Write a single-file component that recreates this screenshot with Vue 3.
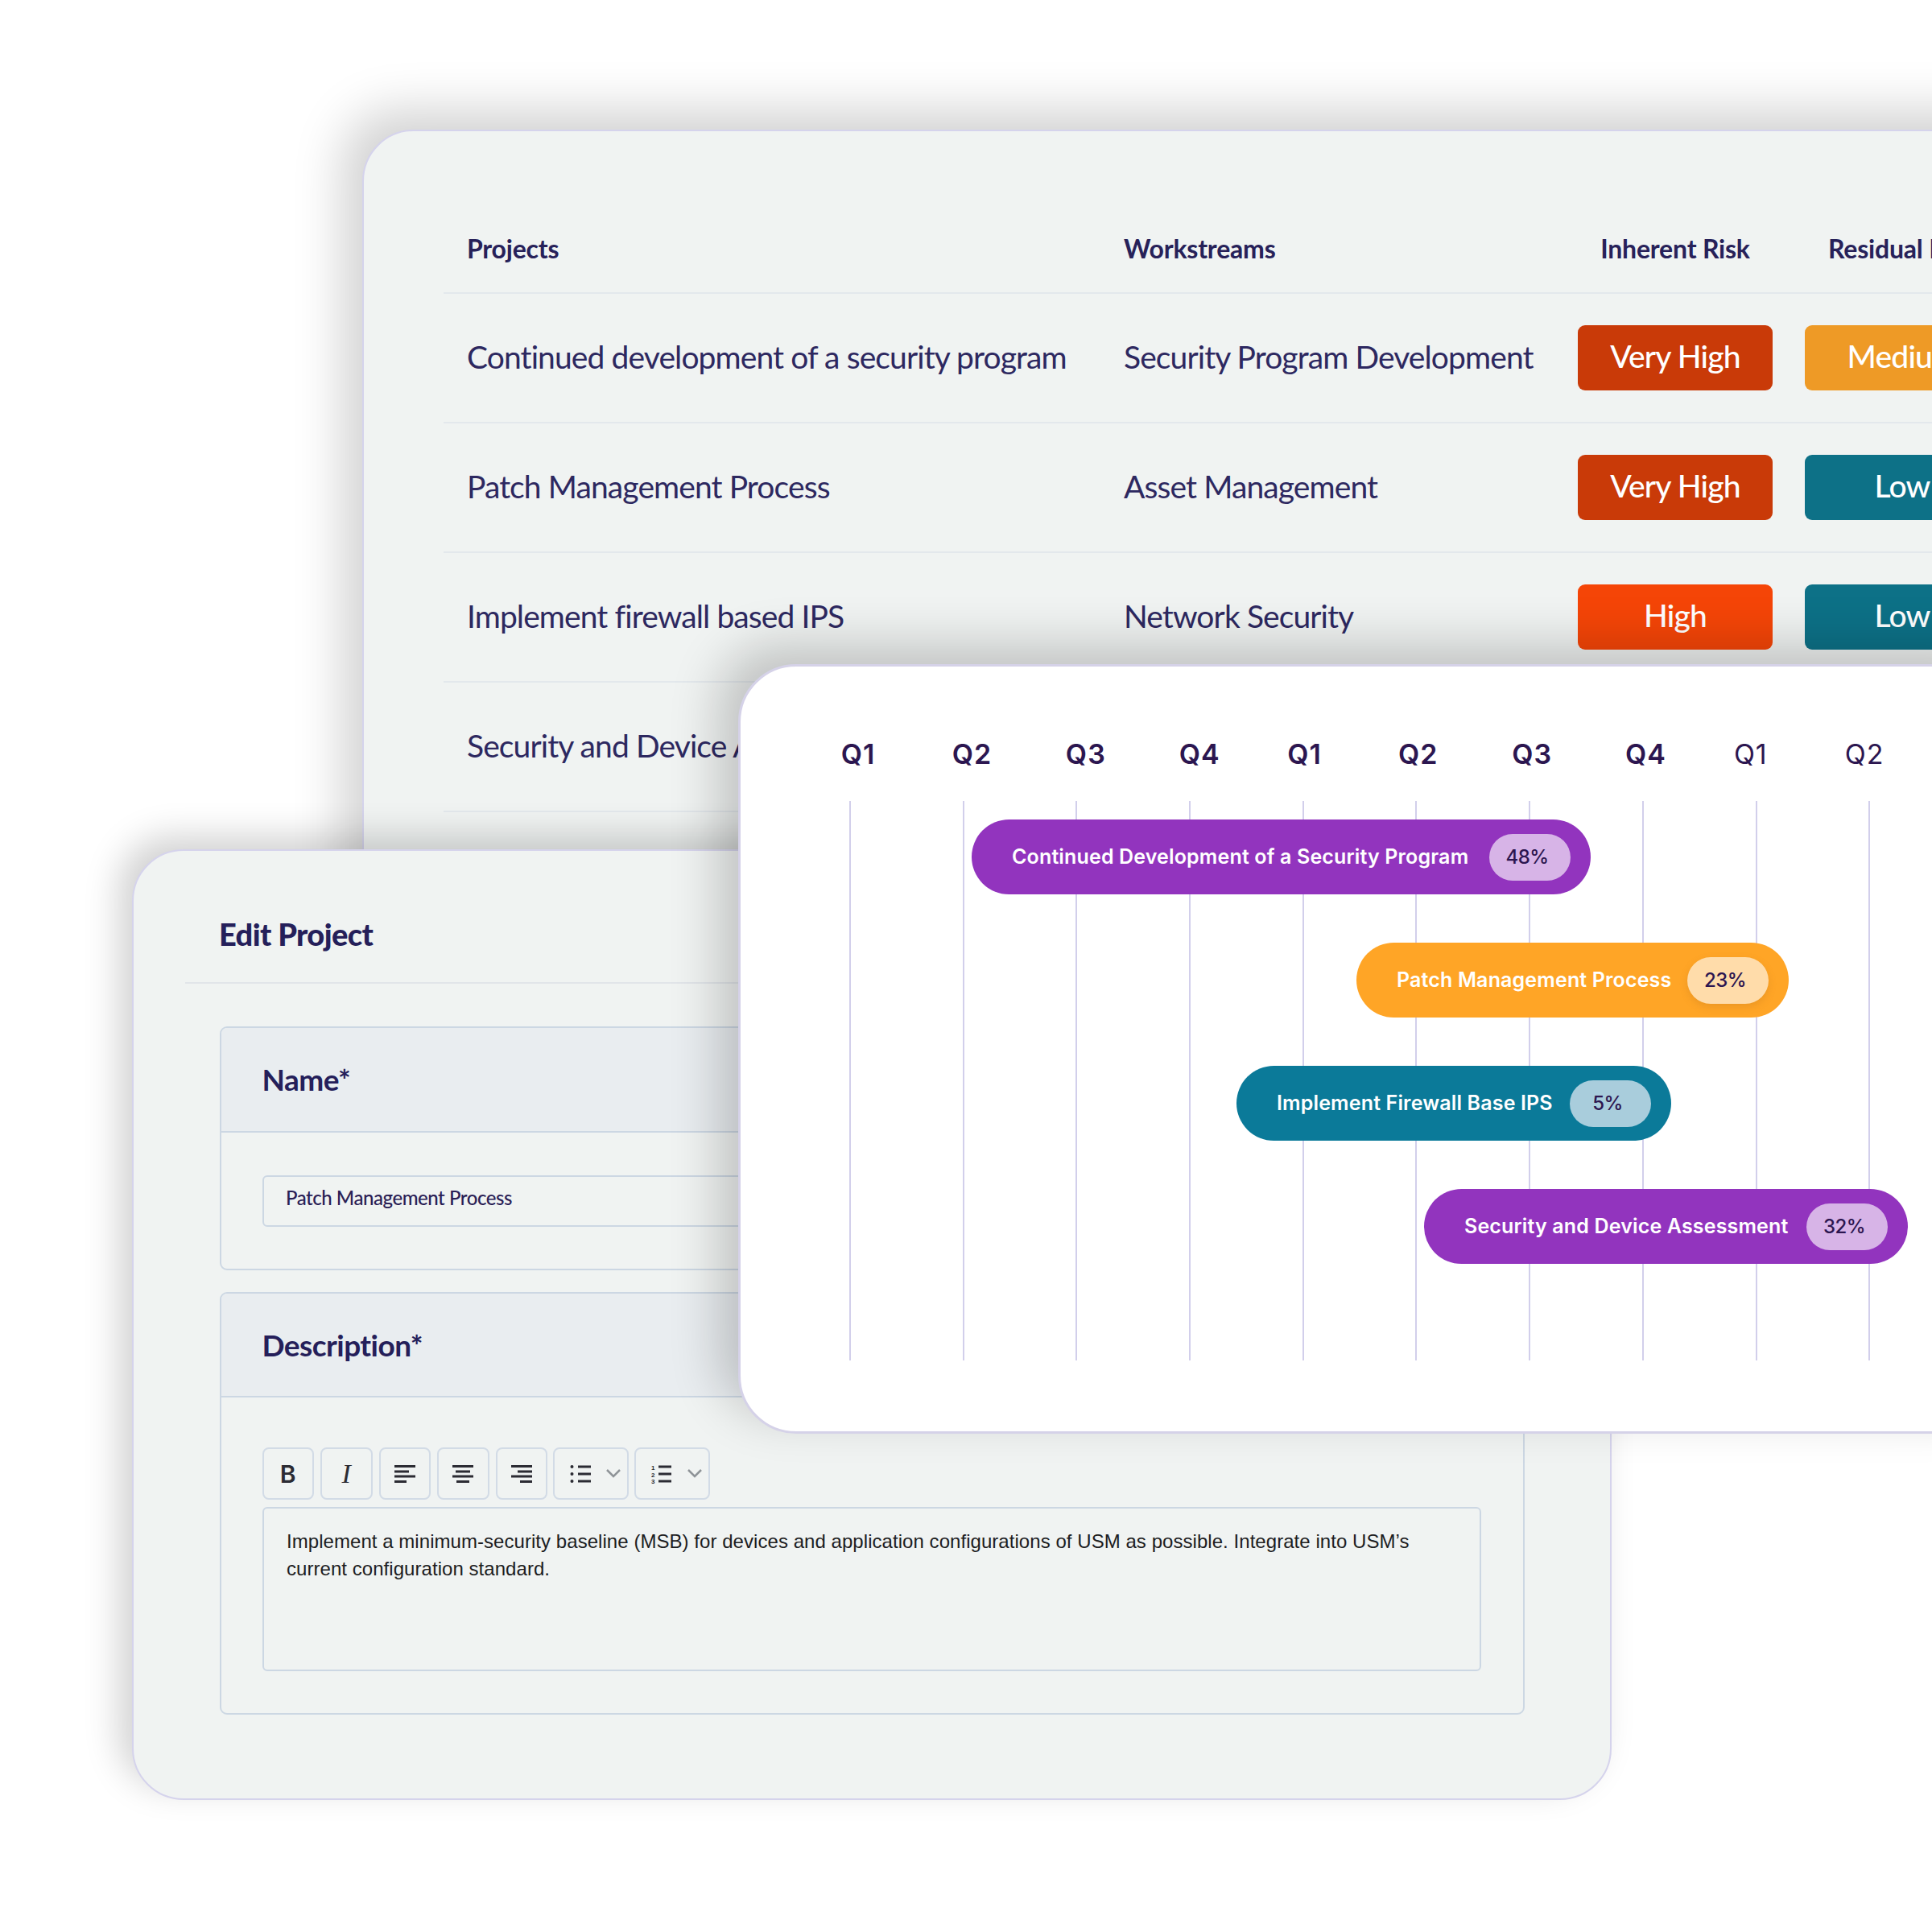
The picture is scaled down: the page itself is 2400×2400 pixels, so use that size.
<script setup>
const rows = [
  { project: 'Continued development of a security program', stream: 'Security Program Development', inherent: ['Very High', 'very-high'], residual: ['Medium', 'medium'] },
  { project: 'Patch Management Process', stream: 'Asset Management', inherent: ['Very High', 'very-high'], residual: ['Low', 'low'] },
  { project: 'Implement firewall based IPS', stream: 'Network Security', inherent: ['High', 'high'], residual: ['Low', 'low'] },
  { project: 'Security and Device Assessment', stream: 'Compliance', inherent: ['High', 'high'], residual: ['Low', 'low'] }
]
const years = [
  [{ q: 'Q1' }, { q: 'Q2' }, { q: 'Q3' }, { q: 'Q4' }],
  [{ q: 'Q1' }, { q: 'Q2' }, { q: 'Q3' }, { q: 'Q4' }],
  [{ q: 'Q1', light: true }, { q: 'Q2', light: true }]
]
const lines = 11
const bars = [
  { name: 'Continued Development of a Security Program', pct: '48%', tone: 'purple', left: 287, width: 769 },
  { name: 'Patch Management Process', pct: '23%', tone: 'orange', left: 765, width: 537 },
  { name: 'Implement Firewall Base IPS', pct: '5%', tone: 'teal', left: 616, width: 540 },
  { name: 'Security and Device Assessment', pct: '32%', tone: 'purple', left: 849, width: 601 }
]
</script>

<template>
  <div class="canvas">
    <section class="card table-card">
      <div class="row head-row">
        <div class="cell">Projects</div>
        <div class="cell">Workstreams</div>
        <div class="cell center">Inherent Risk</div>
        <div class="cell center">Residual Risk</div>
      </div>
      <div v-for="r in rows" :key="r.project" class="row">
        <div class="cell">{{ r.project }}</div>
        <div class="cell">{{ r.stream }}</div>
        <div class="risk-cell"><span class="risk" :class="r.inherent[1]">{{ r.inherent[0] }}</span></div>
        <div class="risk-cell"><span class="risk" :class="r.residual[1]">{{ r.residual[0] }}</span></div>
      </div>
    </section>

    <section class="card edit-card">
      <header class="edit-head"><h2>Edit Project</h2></header>

      <div class="box name-box">
        <div class="box-head">Name*</div>
        <div class="box-body">
          <div class="input">Patch Management Process</div>
        </div>
      </div>

      <div class="box desc-box">
        <div class="box-head">Description*</div>
        <div class="box-body">
          <div class="toolbar">
            <button class="tool glyph-b">B</button>
            <button class="tool glyph-i">I</button>
            <button class="tool">
              <svg width="26" height="22" viewBox="0 0 26 22"><path d="M0 1.500h26M0 8h18M0 14h26M0 20.500h15" class="ink" /></svg>
            </button>
            <button class="tool">
              <svg width="26" height="22" viewBox="0 0 26 22"><path d="M0 1.500h26M4 8h18M0 14h26M5 20.500h16" class="ink" /></svg>
            </button>
            <button class="tool">
              <svg width="26" height="22" viewBox="0 0 26 22"><path d="M0 1.500h26M8 8h18M0 14h26M11 20.500h15" class="ink" /></svg>
            </button>
            <button class="tool wide">
              <svg width="26" height="24" viewBox="0 0 26 24">
                <circle cx="2.500" cy="3" r="2" class="dot" /><circle cx="2.500" cy="12" r="2" class="dot" /><circle cx="2.500" cy="21" r="2" class="dot" />
                <path d="M10 3h16M10 12h16M10 21h16" class="ink" />
              </svg>
              <svg width="18" height="11" viewBox="0 0 18 11"><path d="M1 1l8 8 8-8" class="chev" /></svg>
            </button>
            <button class="tool wide">
              <svg width="26" height="24" viewBox="0 0 26 24">
                <text x="0" y="7" class="num">1</text><text x="0" y="15.500" class="num">2</text><text x="0" y="24" class="num">3</text>
                <path d="M9 3h16M9 12h16M9 21h16" class="ink" />
              </svg>
              <svg width="18" height="11" viewBox="0 0 18 11"><path d="M1 1l8 8 8-8" class="chev" /></svg>
            </button>
          </div>
          <div class="editor">Implement a minimum-security baseline (MSB) for devices and application configurations of USM as possible. Integrate into USM’s current configuration standard.</div>
        </div>
      </div>
    </section>

    <section class="card gantt-card">
      <div class="quarters">
        <div v-for="(year, y) in years" :key="y" class="year">
          <span v-for="(c, i) in year" :key="i" class="quarter" :class="{ light: c.light }">{{ c.q }}</span>
        </div>
      </div>
      <div class="timeline">
        <div class="grid-lines"><i v-for="n in lines" :key="n" class="grid-line"></i></div>
        <div class="bars">
          <div
            v-for="b in bars"
            :key="b.name"
            class="bar"
            :class="b.tone"
            :style="{ marginLeft: b.left + 'px', width: b.width + 'px' }"
          >
            <span class="bar-name">{{ b.name }}</span>
            <span class="pct">{{ b.pct }}</span>
          </div>
        </div>
      </div>
    </section>
  </div>
</template>

<style>
html, body { margin: 0; background: #fff; }
</style>

<style scoped>
.canvas {
  position: relative;
  width: 2400px;
  height: 2400px;
  overflow: hidden;
  background: #fff;
  font-family: Lato, "Liberation Sans", sans-serif;
  color: #2d2860;
}
.card {
  position: absolute;
  box-sizing: border-box;
  background: #f0f3f2;
  border: 2px solid #d5d3ec;
  border-radius: 64px;
}

/* table */
.table-card {
  left: 450px;
  top: 161px;
  width: 2120px;
  height: 1100px;
  padding: 0 0 0 99px;
  box-shadow: -24px -24px 62px rgba(0, 0, 0, 0.18);
}
.row {
  display: grid;
  grid-template-columns: 816px 593px 282px 282px;
  height: 161px;
  align-items: center;
  border-bottom: 2px solid #e3e8ec;
  box-sizing: border-box;
  font-size: 39px;
  letter-spacing: -0.9px;
}
.head-row {
  height: 202px;
  padding-top: 90px;
  align-items: center;
  font-size: 32px;
  font-weight: 700;
  letter-spacing: -0.2px;
  color: #272159;
}
.cell { padding: 0 0 3px 29px; white-space: nowrap; }
.head-row .cell { padding-bottom: 0; }
.head-row .center { padding: 0; width: 242px; text-align: center; }
.risk-cell { display: flex; }
.risk {
  display: flex;
  align-items: center;
  justify-content: center;
  width: 242px;
  height: 81px;
  border-radius: 9px;
  color: #fff;
  font-size: 39px;
  font-weight: 500;
  letter-spacing: -0.8px;
  padding-bottom: 6px;
  box-sizing: border-box;
}
.very-high { background: #c93a08; }
.high { background: #f54507; }
.medium { background: #ee9a26; }
.low { background: #0d7187; }

/* edit */
.edit-card {
  left: 164px;
  top: 1055px;
  width: 1838px;
  height: 1181px;
  box-shadow: -16px -16px 44px rgba(0, 0, 0, 0.18);
}
.edit-head {
  margin: 0 60px 0 64px;
  height: 165px;
  box-sizing: border-box;
  padding: 81px 0 0 42px;
  border-bottom: 2px solid #e1e5e9;
}
.edit-head h2 {
  margin: 0;
  font-size: 38px;
  line-height: 44px;
  font-weight: 900;
  letter-spacing: -0.6px;
  color: #251f5a;
}
.box {
  box-sizing: border-box;
  width: 1621.500px;
  margin-left: 106.500px;
  border: 2px solid #ccd7e3;
  border-radius: 9px;
  overflow: hidden;
}
.name-box { margin-top: 53px; height: 303px; }
.desc-box { margin-top: 27px; height: 525px; }
.box-head {
  box-sizing: border-box;
  display: flex;
  align-items: center;
  background: #e9edf0;
  height: 130px;
  padding: 0 0 2px 51px;
  border-bottom: 2px solid #ccd7e3;
  font-size: 37px;
  font-weight: 700;
  letter-spacing: -0.55px;
  color: #251f5a;
}
.desc-box .box-head { height: 129px; padding-bottom: 0; }
.box-body { padding: 53px 52px 52px 51px; }
.desc-box .box-body { padding-top: 62px; }
.input {
  box-sizing: border-box;
  height: 64px;
  border: 2px solid #ccd7e3;
  border-radius: 6px;
  padding: 0 0 10px 27.500px;
  display: flex;
  align-items: center;
  font-size: 24px;
  font-weight: 500;
  letter-spacing: -0.45px;
  color: #2a2055;
}
.toolbar { display: flex; gap: 8px; height: 65px; }
.tool {
  box-sizing: border-box;
  width: 64.500px;
  height: 65px;
  padding: 0;
  display: flex;
  align-items: center;
  justify-content: center;
  background: transparent;
  border: 2px solid #d2dbe6;
  border-radius: 8px;
  color: #2b2b33;
}
.tool.wide { width: 94px; justify-content: flex-start; padding-left: 19px; gap: 19px; }
.tool.wide:nth-child(6) { margin-left: -1.500px; }
.tool.wide:last-child { margin-left: -1px; }
.glyph-b { font: 600 30px Inter, "Liberation Sans", sans-serif; }
.glyph-i { font: italic 400 34px "Liberation Serif", serif; }
.ink { stroke: #2b2b33; stroke-width: 3; fill: none; }
.dot { fill: #2b2b33; }
.chev { stroke: #8f9498; stroke-width: 2.500; fill: none; }
.num { font: 700 8px "Liberation Sans", sans-serif; fill: #2b2b33; }
.editor {
  box-sizing: border-box;
  height: 204px;
  margin-top: 9px;
  border: 2px solid #ccd7e3;
  border-radius: 6px;
  padding: 24px 24px 0 28.500px;
  font-family: "Liberation Sans", sans-serif;
  font-size: 24px;
  line-height: 34px;
  letter-spacing: 0.05px;
  color: #1d1d1f;
}

/* gantt */
.gantt-card {
  left: 917px;
  top: 825px;
  width: 1601px;
  height: 956px;
  background: #fff;
  border: 3px solid #d5d2e8;
  border-radius: 72px;
  box-shadow: -24px -24px 62px rgba(0, 0, 0, 0.2);
}
.quarters {
  display: flex;
  height: 167px;
  box-sizing: border-box;
  padding: 69px 0 0 75.500px;
  font-family: Inter, "Liberation Sans", sans-serif;
}
.year { display: flex; }
.year + .year { margin-left: -11px; }
.quarter {
  width: 141.330px;
  text-align: center;
  font-size: 34px;
  line-height: 80px;
  letter-spacing: 1px;
  font-weight: 600;
  color: #2c1650;
}
.quarter.light { font-weight: 400; }
.timeline { position: relative; height: 695px; }
.grid-lines { display: flex; gap: 138.700px; height: 100%; padding-left: 135px; }
.grid-line { flex: none; width: 2px; background: #d2cfeb; }
.bars {
  position: absolute;
  inset: 0;
  display: flex;
  flex-direction: column;
  gap: 60px;
  padding-top: 23px;
  font-family: Inter, "Liberation Sans", sans-serif;
}
.bar {
  box-sizing: border-box;
  height: 93px;
  border-radius: 47px;
  display: flex;
  align-items: center;
  justify-content: space-between;
  padding: 0 25px 0 50px;
  color: #fff;
  font-size: 25px;
  font-weight: 600;
  white-space: nowrap;
}
.bar-name { letter-spacing: 0.15px; padding-bottom: 2px; }
.pct {
  box-sizing: border-box;
  width: 101px;
  height: 58px;
  border-radius: 29px;
  display: flex;
  align-items: center;
  justify-content: center;
  padding-right: 7px;
  font-size: 24px;
  letter-spacing: -0.5px;
  font-weight: 500;
  color: #2c1650;
}
.purple { background: #9234be; }
.purple .pct { background: #d7b4e7; }
.orange { background: #ffa526; }
.orange .pct { background: #ffdcaa; box-shadow: 0 4px 10px rgba(180, 110, 30, 0.25); }
.teal { background: #0b7a99; }
.teal .pct { background: #a9cddc; }
</style>
